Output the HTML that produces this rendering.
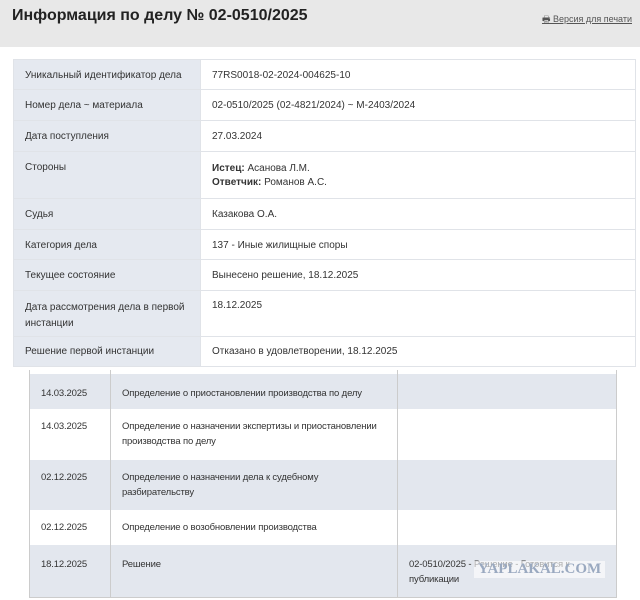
<!DOCTYPE html>
<html><head><meta charset="utf-8"><style>
*{margin:0;padding:0;box-sizing:border-box}
body{width:640px;height:600px;background:#fff;font-family:"Liberation Sans","Noto Sans CJK SC",sans-serif;position:relative;overflow:hidden;color:#333}
.hdr{position:absolute;left:0;top:0;width:640px;height:47px;background:#e8e8e8}
.hdr h1{position:absolute;left:12px;top:7px;font-size:16px;font-weight:bold;color:#222}
.pr{position:absolute;right:8px;top:12px;font-size:9px;color:#555;text-decoration:underline}
.t1{position:absolute;left:13px;top:59px;width:623px;border-collapse:collapse;font-size:10px}
.t1 td{border:1px solid #e0e3e8;vertical-align:top;padding:0 11px}
.t1 td.l{background:#e5e9f0;width:187px;color:#333}
.t2{position:absolute;left:29px;top:370px;width:588px;border-collapse:collapse;font-size:9.5px;letter-spacing:-0.15px;color:#333;border-left:1px solid #ccc;border-right:1px solid #ccc;border-bottom:1px solid #ccc}
.t2 td{border-left:1px solid #ccc;vertical-align:top;padding:0 11px;line-height:15px}
.s td{background:#e3e7ee}
.wm{position:absolute;left:474px;top:561px;font:bold 15px "Liberation Serif",serif;color:#9aa9c0;background:rgba(255,255,255,.6);padding:0 4px}
</style></head><body>
<div class="hdr"><h1>Информация по делу № 02-0510/2025</h1><div class="pr">🖶 Версия для печати</div></div>
<table class="t1">
<tr style="height:30px"><td class="l" style="padding-top:10px">Уникальный идентификатор дела</td><td style="padding-top:10px">77RS0018-02-2024-004625-10</td></tr>
<tr style="height:31px"><td class="l" style="padding-top:10px">Номер дела ~ материала</td><td style="padding-top:10px">02-0510/2025 (02-4821/2024) ~ М-2403/2024</td></tr>
<tr style="height:31px"><td class="l" style="padding-top:10px">Дата поступления</td><td style="padding-top:10px">27.03.2024</td></tr>
<tr style="height:47px"><td class="l" style="padding-top:10px">Стороны</td><td style="padding-top:10px;line-height:14px"><b>Истец:</b> Асанова Л.М.<br><b>Ответчик:</b> Романов А.С.</td></tr>
<tr style="height:31px"><td class="l" style="padding-top:10px">Судья</td><td style="padding-top:10px">Казакова О.А.</td></tr>
<tr style="height:30px"><td class="l" style="padding-top:10px">Категория дела</td><td style="padding-top:10px">137 - Иные жилищные споры</td></tr>
<tr style="height:31px"><td class="l" style="padding-top:10px">Текущее состояние</td><td style="padding-top:10px">Вынесено решение, 18.12.2025</td></tr>
<tr style="height:46px"><td class="l" style="padding-top:9px;line-height:16px">Дата рассмотрения дела в первой инстанции</td><td style="padding-top:9px">18.12.2025</td></tr>
<tr style="height:30px"><td class="l" style="padding-top:9px">Решение первой инстанции</td><td style="padding-top:9px">Отказано в удовлетворении, 18.12.2025</td></tr>
</table>
<table class="t2">
<tr style="height:4px"><td style="width:81px"></td><td style="width:287px"></td><td></td></tr>
<tr class="s" style="height:35px"><td style="padding-top:12px">14.03.2025</td><td style="padding-top:12px">Определение о приостановлении производства по делу</td><td></td></tr>
<tr style="height:51px"><td style="padding-top:10px">14.03.2025</td><td style="padding-top:10px">Определение о назначении экспертизы и приостановлении производства по делу</td><td></td></tr>
<tr class="s" style="height:50px"><td style="padding-top:10px">02.12.2025</td><td style="padding-top:10px">Определение о назначении дела к судебному<br>разбирательству</td><td></td></tr>
<tr style="height:35px"><td style="padding-top:10px">02.12.2025</td><td style="padding-top:10px">Определение о возобновлении производства</td><td></td></tr>
<tr class="s" style="height:52px"><td style="padding-top:12px">18.12.2025</td><td style="padding-top:12px">Решение</td><td style="padding-top:12px">02-0510/2025 - Решение - Готовится к публикации</td></tr>
</table>
<div class="wm">YAPLAKAL.COM</div>
</body></html>
